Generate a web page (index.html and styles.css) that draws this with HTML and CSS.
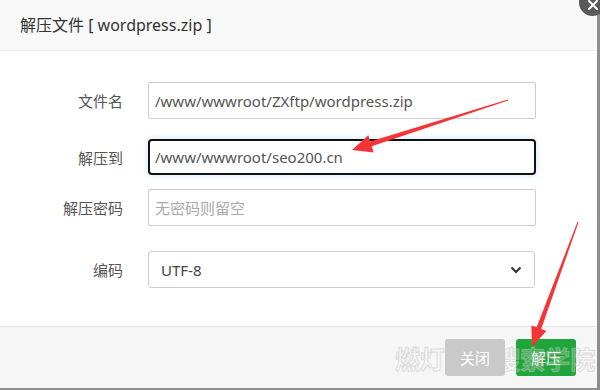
FILE: index.html
```html
<!DOCTYPE html>
<html lang="zh-CN">
<head>
  <meta charset="UTF-8">
  <title>解压文件</title>
  <link rel="stylesheet" href="styles.css">
</head>
<body>
  <div class="layer">
    <div class="layer-title">解压文件 [ wordpress.zip ]</div>
    <span class="layer-close">
      <svg width="12" height="12" viewBox="0 0 12 12"><path d="M2 2L10 10M10 2L2 10" stroke="#fff" stroke-width="2" stroke-linecap="round"/></svg>
    </span>

    <div class="layer-content">
      <div class="form-row row-file">
        <span class="form-label">文件名</span>
        <input class="form-input" type="text" value="/www/wwwroot/ZXftp/wordpress.zip">
      </div>
      <div class="form-row row-path">
        <span class="form-label">解压到</span>
        <input class="form-input is-focus" type="text" value="/www/wwwroot/seo200.cn">
      </div>
      <div class="form-row row-pass">
        <span class="form-label">解压密码</span>
        <input class="form-input" type="text" placeholder="无密码则留空">
      </div>
      <div class="form-row">
        <span class="form-label">编码</span>
        <div class="form-select">
          <span>UTF-8</span>
          <svg width="12" height="8" viewBox="0 0 12 8"><path d="M1.5 1.5L6 6L10.5 1.5" fill="none" stroke="#333" stroke-width="2"/></svg>
        </div>
      </div>
    </div>

    <div class="layer-btns">
      <button class="btn btn-close">关闭</button>
      <button class="btn btn-ok">解压</button>
    </div>
  </div>

  <div class="watermark">燃灯SEO搜索学院</div>

  <!-- annotation arrows -->
  <svg class="marks" width="600" height="390" viewBox="0 0 600 390">
    <polygon fill="#f53535" points="508.2,100.5 371.8,146.3 373.7,152.5 352,150 368.3,135.3 370.2,141.5 507.8,99.5"/>
    <polygon fill="#f53535" points="578.5,222.2 541.2,329.1 546.4,331 532,347 531.4,325.4 536.6,327.3 577.5,221.8"/>
  </svg>
</body>
</html>
```

FILE: styles.css
```css
* {
  box-sizing: border-box;
}

body {
  margin: 0;
  width: 600px;
  height: 390px;
  overflow: hidden;
  background: #8e8e8e;
  font-family: "Noto Sans", "Noto Sans CJK SC", sans-serif;
  color: #333;
}

.layer {
  width: 597px;
  height: 388px;
  background: #fff;
  display: flex;
  flex-direction: column;
}

.layer-title {
  height: 51px;
  padding: 0 20px;
  background: #f8f8f8;
  border-bottom: 1px solid #eee;
  font-size: 16px;
  line-height: 50px;
  color: #333;
}

.layer-close {
  position: absolute;
  left: 579px;
  top: -11px;
  width: 27px;
  height: 27px;
  border-radius: 50%;
  background: #595959;
  display: flex;
  align-items: center;
  justify-content: center;
  padding-top: 4px;
  z-index: 3;
}

.layer-content {
  flex: 1;
  padding-top: 31px;
}

.form-row {
  display: flex;
  align-items: center;
  margin-bottom: 14px;
}

.row-file {
  margin-bottom: 20px;
}

.row-pass {
  margin-bottom: 25px;
}

.form-label {
  width: 123px;
  text-align: right;
  font-size: 15px;
  color: #555;
  flex-shrink: 0;
}

.form-input {
  margin-left: 25px;
  width: 388px;
  height: 37px;
  padding: 0 6px;
  border: 1px solid #ccc;
  border-radius: 2px;
  font-family: "Noto Sans", "Noto Sans CJK SC", sans-serif;
  font-size: 15px;
  color: #555;
  outline: none;
}

.form-input::placeholder {
  color: #a9a9a9;
}

.form-input.is-focus {
  height: 36px;
  border: 2px solid #111;
  border-radius: 4px;
  padding: 0 5px;
  box-shadow: 0 0 6px rgba(120, 170, 230, 0.35);
}

.form-select {
  margin-left: 25px;
  width: 387px;
  height: 37px;
  padding: 0 12px;
  border: 1px solid #ccc;
  border-radius: 3px;
  display: flex;
  align-items: center;
  justify-content: space-between;
  font-size: 15px;
  color: #444;
}

.layer-btns {
  height: 62px;
  background: #f5f6f5;
  border-top: 1px solid #e9e9e9;
  display: flex;
  justify-content: flex-end;
  align-items: flex-start;
  gap: 11px;
  padding: 12px 21px 0 0;
}

.btn {
  width: 60px;
  height: 37px;
  border: none;
  border-radius: 3px;
  color: #fff;
  font-family: "Noto Sans CJK SC", sans-serif;
  font-size: 15px;
}

.btn-close {
  position: relative;
  z-index: 2;
  background: #c9c9c9;
}

.btn-ok {
  background: #20a53a;
}

.watermark {
  position: absolute;
  z-index: 1;
  left: 395px;
  top: 340px;
  font-family: "Noto Sans CJK SC", sans-serif;
  font-size: 25px;
  font-weight: bold;
  color: rgba(255, 255, 255, 0.2);
  -webkit-text-stroke: 1px rgba(195, 195, 195, 0.5);
  white-space: nowrap;
  pointer-events: none;
}

.marks {
  position: absolute;
  z-index: 2;
  left: 0;
  top: 0;
  pointer-events: none;
}
```
